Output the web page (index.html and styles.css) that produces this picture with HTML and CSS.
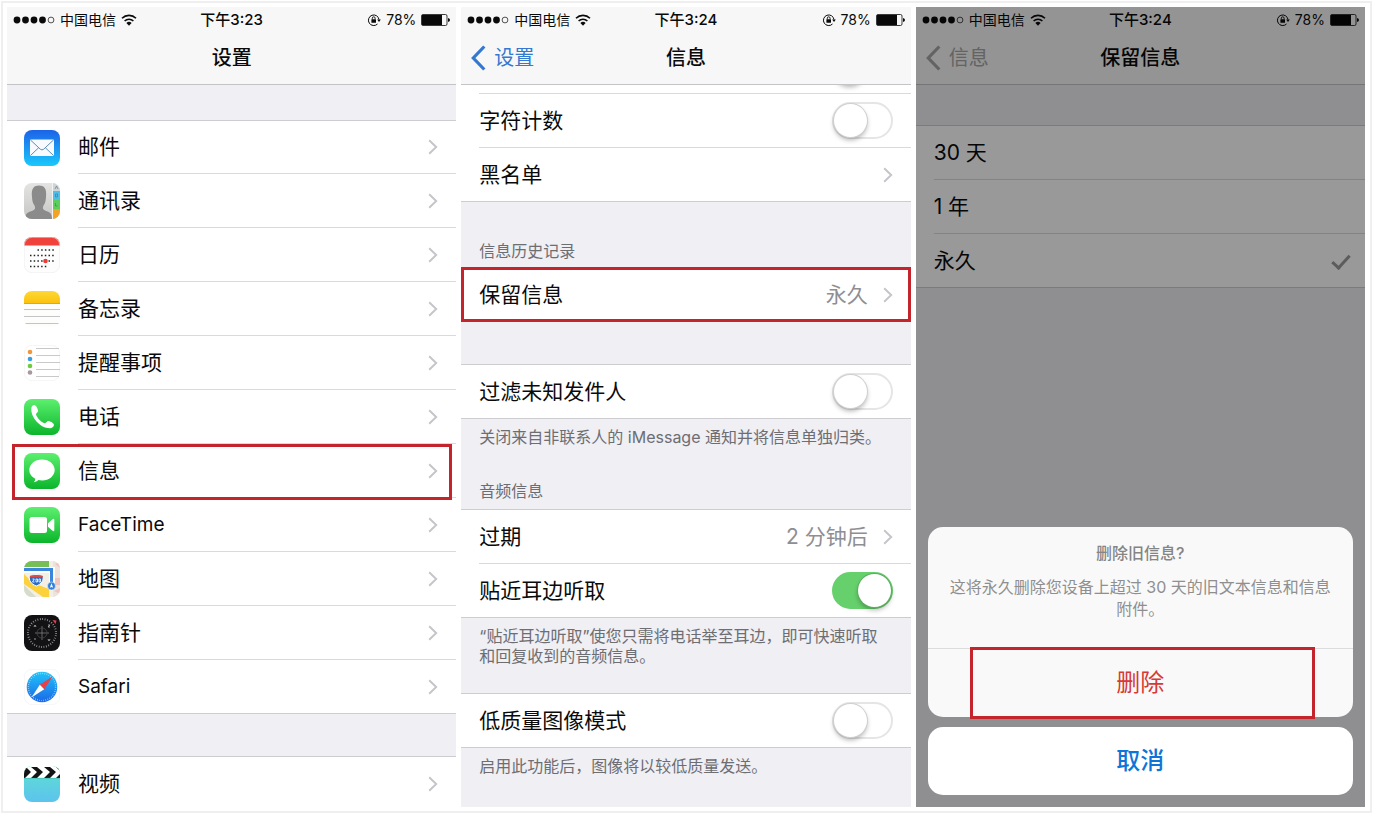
FILE: index.html
```html
<!DOCTYPE html>
<html lang="zh-CN">
<head>
<meta charset="utf-8">
<meta name="viewport" content="width=device-width, initial-scale=1">
<title>设置</title>
<link rel="stylesheet" href="styles.css">
</head>
<body>
<svg class="defs" aria-hidden="true">
  <defs>
    <linearGradient id="g-blue" x1="0" y1="0" x2="0" y2="1"><stop offset="0" stop-color="#1d62e8"/><stop offset="1" stop-color="#19c9fb"/></linearGradient>
    <linearGradient id="g-green" x1="0" y1="0" x2="0" y2="1"><stop offset="0" stop-color="#5cf06f"/><stop offset="1" stop-color="#0bb52b"/></linearGradient>
    <linearGradient id="g-safari" x1="0" y1="0" x2="0" y2="1"><stop offset="0" stop-color="#1fc4fa"/><stop offset="1" stop-color="#1c68e6"/></linearGradient>
    <linearGradient id="g-video" x1="0" y1="0" x2="0" y2="1"><stop offset="0" stop-color="#5fe0cf"/><stop offset="1" stop-color="#5cc3ee"/></linearGradient>
    <linearGradient id="g-note" x1="0" y1="0" x2="0" y2="1"><stop offset="0" stop-color="#fdd835"/><stop offset="1" stop-color="#fbc20e"/></linearGradient>
    <linearGradient id="g-grey" x1="0" y1="0" x2="0" y2="1"><stop offset="0" stop-color="#e4e4e2"/><stop offset="1" stop-color="#c6c6c4"/></linearGradient>
    <clipPath id="tile"><rect width="36" height="36" rx="8"/></clipPath>
    <symbol id="signal" viewBox="0 0 42 8"><circle cx="4" cy="4" r="3.4"/><circle cx="12.500" cy="4" r="3.4"/><circle cx="21" cy="4" r="3.4"/><circle cx="29.500" cy="4" r="3.4"/><circle cx="38" cy="4" r="2.9" fill="none" stroke="currentColor" stroke-width=".7"/></symbol>
    <symbol id="wifi" viewBox="0 0 16 12"><g fill="none" stroke="currentColor" stroke-width="1.6"><path d="M1 4.200a10 10 0 0 1 14 0"/><path d="M3.600 7a6.300 6.300 0 0 1 8.800 0"/></g><path d="M5.400 9a3.800 3.800 0 0 1 5.200 0L8 11.700z"/></symbol>
    <symbol id="lock" viewBox="0 0 14 14"><path d="M10.500 11A5.300 5.300 0 1 1 12 6.600" fill="none" stroke="currentColor" stroke-width="1"/><path d="M10.200 6.600h3.600L12 9z"/><rect x="4.400" y="6.200" width="4.600" height="3.600" rx=".5"/><path d="M5.300 6.400V5.200a1.400 1.400 0 0 1 2.800 0v1.200" fill="none" stroke="currentColor" stroke-width=".9"/></symbol>
    <symbol id="battery" viewBox="0 0 29 12"><rect x=".5" y=".5" width="25.500" height="11" rx="1.500" fill="none" stroke="currentColor" stroke-width=".8"/><rect x="1" y="1" width="20" height="10"/><path d="M27 4q2 .4 2 2t-2 2z"/></symbol>
    <symbol id="chevron" viewBox="0 0 10 16"><path d="M1.200 1.200 8.200 8l-7 6.800" fill="none" stroke="currentColor" stroke-width="1.900"/></symbol>
    <symbol id="back" viewBox="0 0 15 26"><path d="M13.300 1.500 2.300 13l11 11.500" fill="none" stroke="currentColor" stroke-width="3.200"/></symbol>
  </defs>
</svg>

<main class="board">

  <section class="phone">
    <header class="top">
      <div class="status">
        <div class="status-side"><svg class="signal"><use href="#signal"/></svg><span>中国电信</span><svg class="wifi"><use href="#wifi"/></svg></div>
        <time class="clock">下午3:23</time>
        <div class="status-side status-end"><svg class="lock"><use href="#lock"/></svg><span>78%</span><svg class="battery"><use href="#battery"/></svg></div>
      </div>
      <div class="nav"><span></span><h1>设置</h1><span></span></div>
    </header>
    <div class="list">
      <nav class="group group-first">
        <a class="row row-app" href="#mail">
          <svg class="app" viewBox="0 0 36 36"><rect width="36" height="36" rx="8" fill="url(#g-blue)"/><rect x="6" y="9.500" width="24" height="16.500" rx="1" fill="#f7fbff"/><path d="M6.500 10l9.800 9.200q1.700 1.400 3.400 0L29.500 10M6.500 25.500l8.200-7.800M29.500 25.500l-8.200-7.800" fill="none" stroke="#5d8db5" stroke-width="1"/></svg>
          <span class="cell"><span>邮件</span><svg class="chevron"><use href="#chevron"/></svg></span></a>
        <a class="row row-app" href="#contacts">
          <svg class="app" viewBox="0 0 36 36"><g clip-path="url(#tile)"><rect width="36" height="36" fill="url(#g-grey)"/><path d="M1 36c0-6 3-6.500 8-8.500 2.500-1 2.500-3 1.500-5C8.500 20 8.200 17 8 14 7 5 10 2.500 15 2.500S23 5 22 14c-.2 3-.5 6-2.500 8.500-1 2-1 4 1.500 5 5 2 7 2.500 7 8.500z" fill="#8b8b8b"/><rect x="28" width="1" height="36" fill="#f3f3f3"/><rect x="29" width="7" height="8" fill="#cfd4d6"/><rect x="29" y="8" width="7" height="9" fill="#4dbfeb"/><rect x="29" y="17" width="7" height="9" fill="#5bcf5a"/><rect x="29" y="26" width="7" height="10" fill="#f2a225"/><path d="M31 6l1.500-3L34 6M31.500 11v3h2v-3zM31.500 20v3h2" stroke="#52707a" stroke-width=".6" fill="none"/></g></svg>
          <span class="cell"><span>通讯录</span><svg class="chevron"><use href="#chevron"/></svg></span></a>
        <a class="row row-app" href="#calendar">
          <svg class="app" viewBox="0 0 36 36"><g clip-path="url(#tile)"><rect width="36" height="36" fill="#fdfdfd"/><rect width="36" height="8.500" fill="#f0423a"/><g stroke="#222" stroke-width="1.500" stroke-dasharray="1.500 2.200"><path d="M13.500 13h17M6 18.500h24.500M6 24h24.500M6 29.500h17"/></g><circle cx="21.500" cy="24" r="2.300" fill="#ee3b35"/></g><rect x=".3" y=".3" width="35.400" height="35.400" rx="8" fill="none" stroke="#ebebeb" stroke-width=".6"/></svg>
          <span class="cell"><span>日历</span><svg class="chevron"><use href="#chevron"/></svg></span></a>
        <a class="row row-app" href="#notes">
          <svg class="app" viewBox="0 0 36 36"><g clip-path="url(#tile)"><rect width="36" height="36" fill="#fdfdfc"/><rect width="36" height="12" fill="url(#g-note)"/><path d="M0 12.500h36" stroke="#b9a978"/><path d="M0 18.500h36M0 25.500h36M0 32.500h36" stroke="#c4c4c6" stroke-width="1"/></g></svg>
          <span class="cell"><span>备忘录</span><svg class="chevron"><use href="#chevron"/></svg></span></a>
        <a class="row row-app" href="#reminders">
          <svg class="app" viewBox="0 0 36 36"><rect x=".3" y=".3" width="35.400" height="35.400" rx="8" fill="#fff" stroke="#ececec" stroke-width=".6"/><path d="M12 3.500h23M12 10.500h24M12 17.500h24M12 24.500h24M12 31.500h23" stroke="#c9c9cb"/><circle cx="6" cy="7" r="2.300" fill="#f2963a"/><circle cx="6" cy="14" r="2.300" fill="#3a9fe0"/><circle cx="6" cy="21" r="2.300" fill="#6dcb3f"/><circle cx="6" cy="27.500" r="2.300" fill="#a9979f"/></svg>
          <span class="cell"><span>提醒事项</span><svg class="chevron"><use href="#chevron"/></svg></span></a>
        <a class="row row-app" href="#phone">
          <svg class="app" viewBox="0 0 36 36"><rect width="36" height="36" rx="8" fill="url(#g-green)"/><path d="M7.300 9.500C7.500 7 9.500 5.800 11 6.200c1.500.8 3.300 4.500 3.100 6-.2 1.300-2.300 1.900-2.100 3.300.9 3.300 5.300 7.800 8.700 8.700 1.400.2 2-1.900 3.300-2.100 1.500-.2 5.200 1.800 5.900 3.200.4 1.600-1.100 3.700-3.700 3.900C16.500 29.500 6.800 18.700 7.300 9.500z" fill="#fff"/></svg>
          <span class="cell"><span>电话</span><svg class="chevron"><use href="#chevron"/></svg></span></a>
        <a class="row row-app marked marked-inset" href="#messages">
          <svg class="app" viewBox="0 0 36 36"><rect width="36" height="36" rx="8" fill="url(#g-green)"/><path d="M18 6.500c7.200 0 12.700 4.700 12.700 10.500S25.200 27.500 18 27.500c-1.200 0-2.400-.1-3.500-.4-1.300 1.200-3 2-4.900 2.100 1-.9 1.700-2.100 1.700-3.500C7.700 23.900 5.300 20.700 5.300 17 5.300 11.200 10.800 6.500 18 6.500z" fill="#fff"/></svg>
          <span class="cell"><span>信息</span><svg class="chevron"><use href="#chevron"/></svg></span></a>
        <a class="row row-app" href="#facetime">
          <svg class="app" viewBox="0 0 36 36"><rect width="36" height="36" rx="8" fill="url(#g-green)"/><rect x="5.500" y="10" width="17.500" height="16" rx="2.500" fill="#fff"/><path d="M24 16.200l4.500-4q1.800-1.200 1.800.8v10q0 2-1.800.8l-4.500-4z" fill="#fff"/></svg>
          <span class="cell"><span class="latin">FaceTime</span><svg class="chevron"><use href="#chevron"/></svg></span></a>
        <a class="row row-app" href="#maps">
          <svg class="app" viewBox="0 0 36 36"><g clip-path="url(#tile)"><rect width="36" height="36" fill="#f3efe4"/><path d="M0 0h25v6H0z" fill="#76bf57"/><path d="M29 0h7v36h-7z" fill="#ece3dd"/><path d="M31 3l5-2v6zM30 17h6v7h-6zM30 30l6-3v6z" fill="#efc5c0"/><path d="M0 13v10l19 13h6v-8L9 22z" fill="#fbd13c"/><path d="M0 24l12 12H0z" fill="#d5dccb"/><path d="M0 9h28v16" fill="none" stroke="#fff" stroke-width="6"/><path d="M0 8.500h27.500V24" fill="none" stroke="#3a86dc" stroke-width="3"/><path d="M5.500 14.500q7-2 13.500 0c1 5-1.500 8.500-6.700 10.500C7 23 4.500 19.500 5.500 14.500z" fill="#2b6cc8" stroke="#fff"/><path d="M6 14.800q6.500-1.600 12.700 0v1.500H5.800z" fill="#d94b45"/><circle cx="27.500" cy="25" r="4" fill="#2f7fdd" stroke="#fff" stroke-width=".5"/><path d="M27.500 22.300l1.700 4.500-1.700-.9-1.700.9z" fill="#fff"/><path d="M8.500 18h1.800l-1.800 3h2M12 18v3h1.500v-3zM15 18v3h1.500v-3z" fill="none" stroke="#fff" stroke-width=".8"/></g></svg>
          <span class="cell"><span>地图</span><svg class="chevron"><use href="#chevron"/></svg></span></a>
        <a class="row row-app" href="#compass">
          <svg class="app" viewBox="0 0 36 36"><rect width="36" height="36" rx="8" fill="#121214"/><circle cx="18" cy="18" r="14" fill="none" stroke="#aaa" stroke-width="2" stroke-dasharray=".7 1.740"/><path d="M18 11v14M11 18h14" stroke="#898989" stroke-width=".7"/><circle cx="18" cy="18" r="5" fill="none" stroke="#484848" stroke-width=".8"/><path d="M10 12l1-2 1 2M24 10h2l-2 2h2M10 24h2M24 24l1 2 1-2" fill="none" stroke="#bbb" stroke-width=".8"/><path d="M28.500 5l4 .5-1 3.500z" fill="#e93b45"/></svg>
          <span class="cell"><span>指南针</span><svg class="chevron"><use href="#chevron"/></svg></span></a>
        <a class="row row-app" href="#safari">
          <svg class="app" viewBox="0 0 36 36"><rect x=".3" y=".3" width="35.400" height="35.400" rx="8" fill="#fff" stroke="#f0f0f0" stroke-width=".6"/><circle cx="18" cy="18" r="15.300" fill="url(#g-safari)"/><circle cx="18" cy="18" r="13.600" fill="none" stroke="#d5efff" stroke-width="1.400" stroke-dasharray=".5 1.640"/><path d="M28.500 7.500L15.800 15.800l4.400 4.400z" fill="#e93f45"/><path d="M7.500 28.500l8.300-12.700 4.400 4.400z" fill="#fff"/></svg>
          <span class="cell"><span class="latin">Safari</span><svg class="chevron"><use href="#chevron"/></svg></span></a>
      </nav>
      <nav class="group group-next">
        <a class="row row-app" href="#videos">
          <svg class="app" viewBox="0 0 36 36"><g clip-path="url(#tile)"><rect width="36" height="36" fill="url(#g-video)"/><rect width="36" height="12" fill="#fff"/><path d="M0 1h2l5 5-6 6H0zM7 1h6l6 5-6 6H7l6-6zM20 1h6l6 5-6 6h-6l6-6zM32 1h4v4zM36 8v4h-4z" fill="#141414"/><path d="M0 12.300h36" stroke="#3bb3a6" stroke-width=".6"/></g></svg>
          <span class="cell"><span>视频</span><svg class="chevron"><use href="#chevron"/></svg></span></a>
      </nav>
    </div>
  </section>

  <section class="phone">
    <header class="top">
      <div class="status">
        <div class="status-side"><svg class="signal"><use href="#signal"/></svg><span>中国电信</span><svg class="wifi"><use href="#wifi"/></svg></div>
        <time class="clock">下午3:24</time>
        <div class="status-side status-end"><svg class="lock"><use href="#lock"/></svg><span>78%</span><svg class="battery"><use href="#battery"/></svg></div>
      </div>
      <div class="nav"><a class="back" href="#settings"><svg><use href="#back"/></svg>设置</a><h2>信息</h2><span></span></div>
    </header>
    <div class="list">
      <div class="group group-scrolled">
        <div class="row"><span class="cell cell-end"><span class="knob-shade"></span></span></div>
        <label class="row"><span class="cell"><span>字符计数</span><input class="switch" type="checkbox"></span></label>
        <a class="row" href="#blocked"><span class="cell"><span>黑名单</span><svg class="chevron"><use href="#chevron"/></svg></span></a>
      </div>
      <h3 class="caption">信息历史记录</h3>
      <div class="group">
        <a class="row marked" href="#keep"><span class="cell"><span>保留信息</span><span class="value">永久</span><svg class="chevron"><use href="#chevron"/></svg></span></a>
      </div>
      <div class="group group-next">
        <label class="row"><span class="cell"><span>过滤未知发件人</span><input class="switch" type="checkbox"></span></label>
      </div>
      <p class="note">关闭来自非联系人的 iMessage 通知并将信息单独归类。</p>
      <h3 class="caption caption-near">音频信息</h3>
      <div class="group">
        <a class="row" href="#expire"><span class="cell"><span>过期</span><span class="value">2 分钟后</span><svg class="chevron"><use href="#chevron"/></svg></span></a>
        <label class="row"><span class="cell"><span>贴近耳边听取</span><input class="switch" type="checkbox" checked></span></label>
      </div>
      <p class="note note-long">“贴近耳边听取”使您只需将电话举至耳边，即可快速听取和回复收到的音频信息。</p>
      <div class="group">
        <label class="row"><span class="cell"><span>低质量图像模式</span><input class="switch" type="checkbox"></span></label>
      </div>
      <p class="note">启用此功能后，图像将以较低质量发送。</p>
    </div>
  </section>

  <section class="phone">
    <header class="top">
      <div class="status">
        <div class="status-side"><svg class="signal"><use href="#signal"/></svg><span>中国电信</span><svg class="wifi"><use href="#wifi"/></svg></div>
        <time class="clock">下午3:24</time>
        <div class="status-side status-end"><svg class="lock"><use href="#lock"/></svg><span>78%</span><svg class="battery"><use href="#battery"/></svg></div>
      </div>
      <div class="nav"><a class="back back-muted" href="#messages"><svg><use href="#back"/></svg>信息</a><h2>保留信息</h2><span></span></div>
    </header>
    <div class="list">
      <div class="group group-choices">
        <label class="row"><span class="cell"><span>30 天</span><input class="tick" type="radio" name="keep"></span></label>
        <label class="row"><span class="cell"><span>1 年</span><input class="tick" type="radio" name="keep"></span></label>
        <label class="row"><span class="cell"><span>永久</span><input class="tick" type="radio" name="keep" checked></span></label>
      </div>
    </div>
    <div class="dim" role="dialog" aria-labelledby="sheet-title">
      <div class="sheet">
        <div class="sheet-text">
          <h3 id="sheet-title">删除旧信息?</h3>
          <p>这将永久删除您设备上超过 30 天的旧文本信息和信息附件。</p>
        </div>
        <button class="sheet-button delete" type="button">删除</button>
      </div>
      <button class="sheet-button cancel" type="button">取消</button>
    </div>
  </section>

</main>
</body>
</html>
```
FILE: styles.css
```css
* { box-sizing: border-box; }

body {
  margin: 0;
  padding: 1px;
  height: 100vh;
  background: #fff;
  color: #0a0a0a;
  font: 21px/28px Inter, "Noto Sans CJK SC", sans-serif;
}

h1, h2, h3, p { margin: 0; font-weight: 400; }
a { color: inherit; text-decoration: none; }
svg { flex: none; fill: currentColor; }
.defs { position: absolute; width: 0; height: 0; }

.board {
  display: grid;
  grid-template-columns: repeat(3, minmax(0, 1fr));
  grid-template-rows: minmax(0, 1fr);
  gap: 5px;
  height: 100%;
  padding: 4px 5px 4px 4px;
  border: 2px solid #efeff0;
}

.phone {
  position: relative;
  display: flex;
  flex-direction: column;
  overflow: hidden;
  background: #efeff4;
}

/* Status and navigation bars */
.top {
  position: relative;
  z-index: 1;
  flex: none;
  border-bottom: 1px solid #c4c4c8;
  background: #f7f7f7;
}

.status {
  display: grid;
  grid-template-columns: 1fr auto 1fr;
  align-items: center;
  padding: 3px 6px 1px;
  font-size: 14px;
  line-height: 20px;
}

.status-side { display: flex; align-items: center; gap: 5px; }
.status-end { justify-content: flex-end; }
.clock { font-size: 15px; font-weight: 500; }
.signal { width: 42px; height: 8px; }
.wifi { width: 16px; height: 12px; }
.lock { width: 14px; height: 14px; }
.battery { width: 29px; height: 12px; }

.nav {
  display: grid;
  grid-template-columns: 1fr auto 1fr;
  align-items: center;
  padding: 13px 10px 12px;
}

.nav h1, .nav h2 { font-size: 20px; font-weight: 500; }
.back { display: flex; align-items: center; gap: 8px; color: #3478d0; font-size: 20px; }
.back svg { width: 15px; height: 26px; }
.back-muted { color: #a6a6a6; }

/* Grouped lists */
.list { flex: 1; min-height: 0; }

.group {
  border: solid #cdccd1;
  border-width: 1px 0;
  background: #fff;
}

.group-first { margin-top: 35px; }
.group-next { margin-top: 42px; }
.group-choices { margin-top: 40px; }
.group-scrolled { margin-top: -46px; }

.row { position: relative; display: flex; align-items: center; padding-left: 18px; }
.row-app { padding-left: 17px; }

.cell {
  display: flex;
  flex: 1;
  align-items: center;
  justify-content: space-between;
  min-height: 54px;
  padding-right: 18px;
  border-bottom: 1px solid #dadadc;
}

.row:last-child .cell { min-height: 53px; border-bottom: 0; }
.group-first { border-top-width: 1px; }
.group-first .row:first-child .cell { min-height: 53px; }
.cell-end { justify-content: flex-end; }
.app { width: 36px; height: 36px; margin-right: 18px; }
.latin { font-size: 19px; }
.chevron { width: 10px; height: 16px; color: #c4c4c9; }
.value { margin-left: auto; margin-right: 15px; color: #8e8e93; }

.marked::after {
  content: "";
  position: absolute;
  inset: -1px 0;
  border: 3px solid #c4242c;
  pointer-events: none;
}

.marked-inset::after { inset: 0 4px -2px 5px; }

.caption, .note { padding: 0 18px; color: #6d6d72; font-size: 16px; line-height: 20px; }
.caption { padding-top: 39px; padding-bottom: 6px; }
.caption-near { padding-top: 34px; padding-bottom: 8px; }
.note { padding-top: 8px; }
.note-long { padding-right: 28px; padding-bottom: 27px; }

.switch {
  appearance: none;
  flex: none;
  width: 61px;
  height: 37px;
  margin: 0;
  border: 2px solid #e5e5e5;
  border-radius: 19px;
  background: #fff;
}

.switch::before {
  content: "";
  display: block;
  width: 33px;
  height: 33px;
  border-radius: 50%;
  background: #fff;
  box-shadow: 0 0 0 1px #d0d0d0, 0 3px 5px rgba(0, 0, 0, .3);
}

.switch:checked { border-color: #66d16c; background: #66d16c; }
.switch:checked::before { margin-left: auto; box-shadow: 0 0 0 1px #5fae63, 0 3px 5px rgba(0, 0, 0, .3); }

.knob-shade {
  width: 35px;
  height: 35px;
  margin-right: 26px;
  border-radius: 50%;
  box-shadow: 0 3px 5px rgba(0, 0, 0, .3);
}

.tick { appearance: none; flex: none; width: 15px; height: 12px; margin: 0; }

.tick:checked::before {
  content: "";
  display: block;
  width: 15px;
  height: 7px;
  border: solid #9a9a9a;
  border-width: 0 0 3px 3px;
  transform: rotate(-48deg);
}

/* Action sheet */
.dim {
  position: absolute;
  inset: 0;
  z-index: 2;
  display: flex;
  flex-direction: column;
  justify-content: flex-end;
  gap: 10px;
  padding: 12px;
  background: rgba(0, 0, 0, .4);
}

.sheet { border-radius: 15px; background: #f9f9f9; }

.sheet-text {
  padding: 15px 20px 28px;
  border-bottom: 1px solid #dcdcde;
  color: #8f8f8f;
  font-size: 16px;
  line-height: 22px;
  text-align: center;
}

.sheet-text h3 { margin-bottom: 12px; font-size: 16px; font-weight: 500; color: #858585; }

.sheet-button {
  position: relative;
  width: 100%;
  height: 68px;
  padding: 0;
  border: 0;
  border-radius: 15px;
  background: #fff;
  font: inherit;
  font-size: 24px;
}

.delete { background: transparent; color: #d63a36; }
.cancel { color: #0f74d8; font-weight: 500; }

.delete::after {
  content: "";
  position: absolute;
  inset: -2px 9% -2px 10%;
  border: 3px solid #c4242c;
}
```
